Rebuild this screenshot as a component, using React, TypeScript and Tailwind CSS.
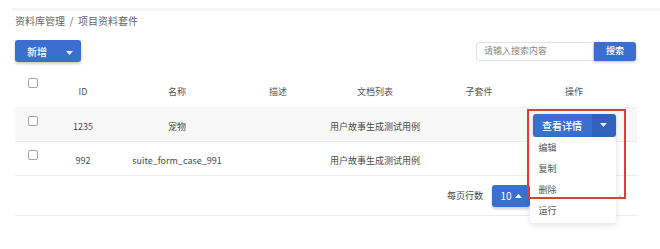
import React from "react";

const font = { fontFamily: '"Noto Sans CJK SC", "Noto Sans", sans-serif' };

const cols = "grid grid-cols-[35px_66px_122px_80px_114px_94px_96px_15px]";

function Box() {
  return (
    <span className="block w-[10px] h-[10px] rounded-[2px] border border-[#a5a5a5] bg-white" />
  );
}

function Caret({ up = false }: { up?: boolean }) {
  return (
    <svg width="7" height="4" viewBox="0 0 7 4" className="inline-block">
      {up ? (
        <path d="M0 4 L3.5 0 L7 4 Z" fill="currentColor" />
      ) : (
        <path d="M0 0 L3.5 4 L7 0 Z" fill="currentColor" />
      )}
    </svg>
  );
}

export default function App() {
  const rows = [
    { id: "1235", name: "宠物", docs: "用户故事生成测试用例", active: true },
    { id: "992", name: "suite_form_case_991", docs: "用户故事生成测试用例", active: false },
  ];

  return (
    <div
      className="relative w-[660px] h-[249px] bg-white overflow-hidden text-[#4a4a4a]"
      style={font}
    >
      {/* top bar shadow */}
      <div className="ml-[12px] mt-[8px] h-[3px] bg-[#f6f6f6]" />

      <div className="px-[15px]">
        <div className="mt-[3px] text-[10px] leading-[14px] text-[#666]">
          资料库管理 &nbsp;/&nbsp; 项目资料套件
        </div>

        {/* toolbar */}
        <div className="mt-[12px] flex items-center justify-between pr-[9px]">
          <button className="flex items-center h-[22px] w-[66px] rounded-[3px] bg-[#3a6fcf] text-white text-[10px] font-medium shadow-[0_2px_3px_rgba(0,0,0,0.2)]">
            <span className="ml-[12px]">新增</span>
            <span className="ml-[19px] text-white/90">
              <Caret />
            </span>
          </button>
          <div className="flex items-center">
            <div className="w-[118px] h-[19px] border border-[#e2e2e2] rounded-l-[3px] flex items-center pl-[7px] text-[9px] text-[#888]">
              请输入搜索内容
            </div>
            <button className="w-[42px] h-[19px] rounded-r-[3px] bg-[#3a6fcf] text-white text-[9px] font-medium shadow-[0_1px_3px_rgba(0,0,0,0.25)]">
              搜索
            </button>
          </div>
        </div>

        {/* table */}
        <div className="mt-[8px] w-[622px] text-[9px]">
          <div className={`${cols} h-[38px] border-b border-[#f0f0f0]`}>
            <div className="pl-[13px] pt-[8px]">
              <Box />
            </div>
            {["ID", "名称", "描述", "文档列表", "子套件", "操作"].map((h) => (
              <div key={h} className="flex items-end justify-center pb-[9px] text-[#555]">
                {h}
              </div>
            ))}
            <div />
          </div>

          {rows.map((r) => (
            <div
              key={r.id}
              className={`${cols} h-[34px] border-b border-[#ececec] ${r.active ? "bg-[#f8f8f8]" : ""}`}
            >
              <div className="pl-[13px] pt-[8px]">
                <Box />
              </div>
              <div className="flex items-center justify-center pt-[4px]">{r.id}</div>
              <div className="flex items-center justify-center pt-[4px]">{r.name}</div>
              <div />
              <div className="flex items-center justify-center pt-[4px]">{r.docs}</div>
              <div />
              <div className="flex items-center justify-center">
                {r.active && (
                  <div className="relative mt-[1px]">
                    <div className="flex h-[23px] w-[83px] rounded-[3px] overflow-hidden shadow-[0_1px_3px_rgba(0,0,0,0.2)]">
                      <div className="w-[59px] bg-[#3a6fcf] text-white text-[10px] font-medium flex items-center justify-center">
                        查看详情
                      </div>
                      <div className="w-[24px] bg-[#3262bb] text-white/90 flex items-center justify-center">
                        <Caret />
                      </div>
                    </div>
                    <div className="absolute left-[-3px] top-[23px] w-[86px] bg-white rounded-[3px] shadow-[0_2px_6px_rgba(0,0,0,0.12)] py-[1px] z-10">
                      {["编辑", "复制", "删除", "运行"].map((m) => (
                        <div key={m} className="h-[21px] flex items-center pl-[9px] text-[9px] text-[#555]">
                          {m}
                        </div>
                      ))}
                    </div>
                  </div>
                )}
              </div>
              <div />
            </div>
          ))}

          {/* pagination */}
          <div className="h-[40px] flex items-center justify-end border-b border-[#ececec]">
            <span className="text-[9px] text-[#444]">每页行数</span>
            <button className="ml-[9px] w-[38px] h-[22px] rounded-[3px] bg-[#3a6fcf] text-white text-[10px] flex items-center justify-center gap-[3px] shadow-[0_2px_3px_rgba(0,0,0,0.2)]">
              10
              <Caret up />
            </button>
            <div className="w-[107px] flex justify-end pr-[16px] text-[8px] text-[#999]">›</div>
          </div>
        </div>
      </div>

      {/* highlight annotation */}
      <div className="absolute left-[527px] top-[109px] w-[99px] h-[90px] border-2 border-[#e23a3f] z-20 pointer-events-none" />
    </div>
  );
}
